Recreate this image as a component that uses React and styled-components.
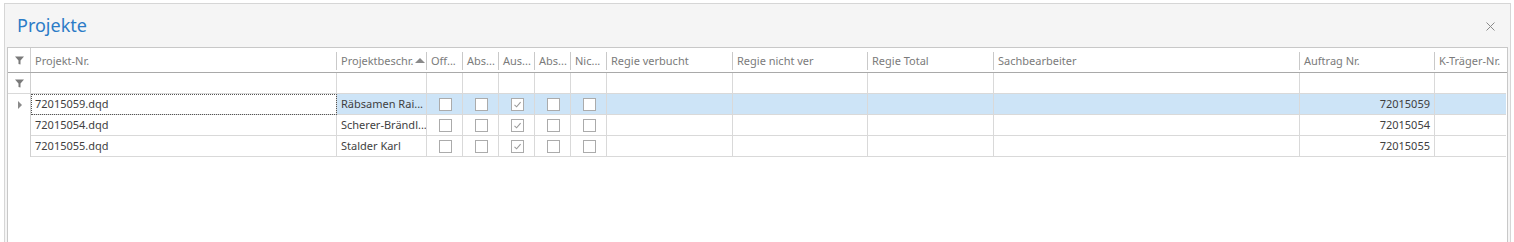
import React from 'react';
import styled, {createGlobalStyle} from "styled-components";

const COLS = [23, 306, 90, 36, 36, 36, 36, 36, 126, 135, 126, 306, 135, 71];
const TEMPLATE = COLS.map(w => `${w}px`).join(' ');

const columns = [
    {title: "Projekt-Nr.", key: "nr"},
    {title: "Projektbeschr.", key: "desc", sorted: true},
    {title: "Off...", key: "off", check: true},
    {title: "Abs...", key: "abs1", check: true},
    {title: "Aus...", key: "aus", check: true},
    {title: "Abs...", key: "abs2", check: true},
    {title: "Nic...", key: "nic", check: true},
    {title: "Regie verbucht", key: "rv"},
    {title: "Regie nicht ver", key: "rnv"},
    {title: "Regie Total", key: "rt"},
    {title: "Sachbearbeiter", key: "sb"},
    {title: "Auftrag Nr.", key: "auftrag", right: true},
    {title: "K-Träger-Nr.", key: "kt"},
];

const rows = [
    {nr: "72015059.dqd", desc: "Räbsamen Rai...", off: false, abs1: false, aus: true, abs2: false, nic: false, auftrag: "72015059"},
    {nr: "72015054.dqd", desc: "Scherer-Brändl...", off: false, abs1: false, aus: true, abs2: false, nic: false, auftrag: "72015054"},
    {nr: "72015055.dqd", desc: "Stalder Karl", off: false, abs1: false, aus: true, abs2: false, nic: false, auftrag: "72015055"},
];

const Funnel = () => (
    <svg width="9" height="9" viewBox="0 0 9 9">
        <path d="M0 0.5h9L5.5 4.5V8.5L3.5 8V4.5Z" fill="#7a7a7a"/>
    </svg>
);

const Check = () => (
    <svg width="9" height="9" viewBox="0 0 9 9">
        <path d="M1.5 4.8L3.6 6.8L7.6 2.2" fill="none" stroke="#9a9a9a" strokeWidth="1.1"/>
    </svg>
);

export default function App() {
    return (
        <>
            <GlobalStyle/>
            <Panel>
                <TitleBar>
                    <h1>Projekte</h1>
                    <CloseButton>
                        <svg width="9" height="9" viewBox="0 0 9 9">
                            <path d="M0.5 0.5L8.5 8.5M8.5 0.5L0.5 8.5" stroke="#8a8a8a" strokeWidth="1"/>
                        </svg>
                    </CloseButton>
                </TitleBar>
                <Grid>
                    <HeaderRow>
                        <IndicatorCell><Funnel/></IndicatorCell>
                        {columns.map(col => (
                            <HeaderCell key={col.key}>
                                <span>{col.title}</span>
                                {col.sorted && <SortArrow/>}
                            </HeaderCell>
                        ))}
                    </HeaderRow>
                    <FilterRow>
                        <IndicatorCell><Funnel/></IndicatorCell>
                        {columns.map(col => <Cell key={col.key}/>)}
                    </FilterRow>
                    {rows.map((row, i) => (
                        <DataRow key={i} $selected={i === 0}>
                            <IndicatorCell>{i === 0 && <Arrow/>}</IndicatorCell>
                            {columns.map((col, c) => (
                                <Cell key={col.key} $right={col.right} $focused={i === 0 && c === 0} $center={col.check}>
                                    {col.check
                                        ? <CheckBox>{row[col.key] && <Check/>}</CheckBox>
                                        : row[col.key]}
                                </Cell>
                            ))}
                        </DataRow>
                    ))}
                </Grid>
            </Panel>
        </>
    );
}

const GlobalStyle = createGlobalStyle`
    html, body{
        margin: 0;
        padding: 0;
        background: #ffffff;
        overflow: hidden;
        height: 242px;
    }
    *{
        box-sizing: border-box;
    }
`;

const Panel = styled.div`
    margin: 3px 0 0 4px;
    width: 1507px;
    height: 239px;
    border: 1px solid #d6d6d6;
    border-bottom: none;
    background-color: #f5f5f5;
    padding: 0 2px;
    display: flex;
    flex-direction: column;
    font-family: "Noto Sans", "Open Sans", sans-serif;
`;

const TitleBar = styled.div`
    height: 43px;
    flex-shrink: 0;
    display: flex;
    align-items: center;
    justify-content: space-between;
    padding: 0 13px 0 10px;
    h1{
        margin: 0;
        font-size: 18px;
        font-weight: 400;
        color: #2b7cc7;
        line-height: 1;
        padding-bottom: 2px;
    }
`;

const CloseButton = styled.div`
    display: flex;
    align-items: center;
    padding-top: 1px;
`;

const Grid = styled.div`
    flex: 1;
    background-color: #ffffff;
    border: 1px solid #c8c8c8;
    border-bottom: none;
    font-size: 11px;
    overflow: hidden;
`;

const Row = styled.div`
    display: grid;
    grid-template-columns: ${TEMPLATE};
`;

const HeaderRow = styled(Row)`
    height: 25px;
    border-bottom: 1px solid #a9a9a9;
`;

const FilterRow = styled(Row)`
    height: 21px;
    & > div{
        border-bottom: 1px solid #d9d9d9;
    }
`;

const DataRow = styled(Row)`
    height: 21px;
    & > div{
        background-color: ${p => p.$selected ? "#cde4f7" : "#ffffff"};
    }
    & > div:not(:first-child){
        border-bottom: 1px solid #d9d9d9;
    }
`;

const IndicatorCell = styled.div`
    display: flex;
    align-items: center;
    justify-content: center;
    border-right: 1px solid #d0d0d0;
    background-color: #ffffff !important;
    padding-left: 1px;
`;

const HeaderCell = styled.div`
    position: relative;
    display: flex;
    align-items: center;
    padding: 1px 4px 0 4px;
    color: #7b7b7b;
    white-space: nowrap;
    overflow: hidden;
    &::after{
        content: "";
        position: absolute;
        right: 0;
        top: 4px;
        bottom: 2px;
        width: 1px;
        background-color: #c9c9c9;
    }
    &:last-child::after{
        display: none;
    }
`;

const SortArrow = styled.span`
    width: 0;
    height: 0;
    margin-left: 1px;
    margin-bottom: 1px;
    border-left: 5px solid transparent;
    border-right: 5px solid transparent;
    border-bottom: 5px solid #8a8a8a;
`;

const Cell = styled.div`
    display: flex;
    align-items: center;
    justify-content: ${p => p.$center ? "center" : p.$right ? "flex-end" : "flex-start"};
    padding: 0 4px 1px 4px;
    color: #3f3f3f;
    white-space: nowrap;
    overflow: hidden;
    border-right: 1px solid #d9d9d9;
    &:last-child{
        border-right: none;
    }
    ${p => p.$focused && `
        background-color: #ffffff !important;
        outline: 1px dotted #555555;
        outline-offset: -1px;
    `}
`;

const CheckBox = styled.span`
    width: 13px;
    height: 13px;
    border: 1px solid #ababab;
    background-color: #ffffff;
    display: flex;
    align-items: center;
    justify-content: center;
    margin: 1px 0 0 1px;
`;

const Arrow = styled.span`
    width: 0;
    height: 0;
    border-top: 4px solid transparent;
    border-bottom: 4px solid transparent;
    border-left: 4px solid #8a8a8a;
`;
